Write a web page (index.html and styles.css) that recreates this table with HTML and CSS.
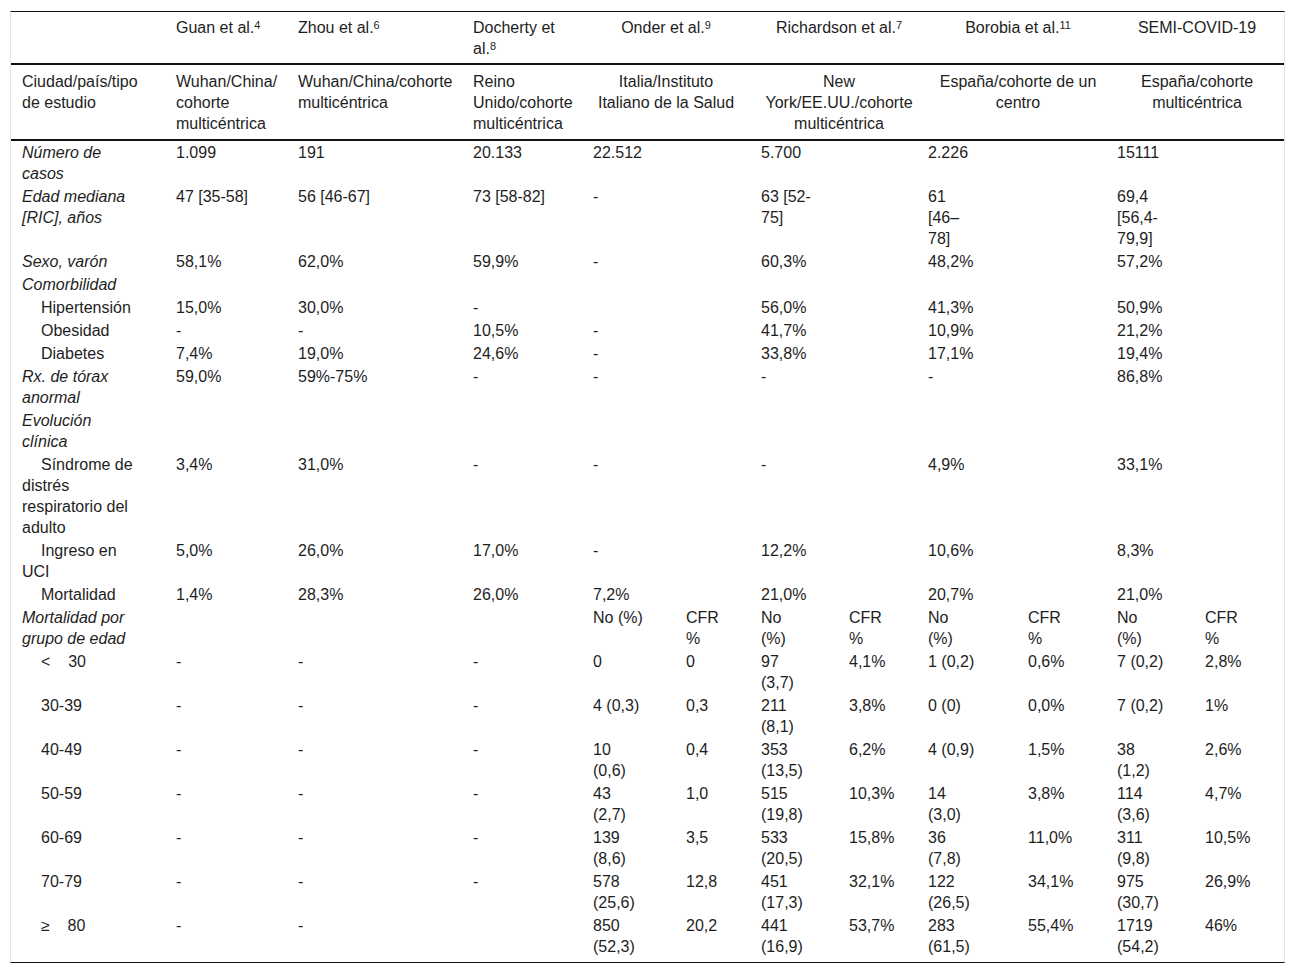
FILE: index.html
```html
<!DOCTYPE html>
<html lang="es">
<head>
<meta charset="utf-8">
<title>Tabla comparativa de cohortes COVID-19</title>
<link rel="stylesheet" href="styles.css">
</head>
<body>
<div class="wrap">
<table class="data">
<colgroup>
<col class="w154"><col class="w122"><col class="w175"><col class="w120">
<col class="w93"><col class="w75"><col class="w88"><col class="w79">
<col class="w100"><col class="w89"><col class="w88"><col class="w90">
</colgroup>
<thead>
<tr class="study">
<th></th>
<th>Guan et al.<sup>4</sup></th>
<th>Zhou et al.<sup>6</sup></th>
<th class="doch">Docherty et al.<sup>8</sup></th>
<th colspan="2" class="c onder">Onder et al.<sup>9</sup></th>
<th colspan="2" class="c rich">Richardson et al.<sup>7</sup></th>
<th colspan="2" class="c boro">Borobia et al.<sup>11</sup></th>
<th colspan="2" class="c semi">SEMI-COVID-19</th>
</tr>
<tr class="place">
<th class="first">Ciudad/país/tipo de estudio</th>
<th class="guan">Wuhan/China/<wbr>cohorte multicéntrica</th>
<th>Wuhan/China/cohorte multicéntrica</th>
<th class="doch">Reino <span class="nw">Unido/cohorte</span> multicéntrica</th>
<th colspan="2" class="c onder">Italia/Instituto Italiano de la Salud</th>
<th colspan="2" class="c rich">New York/EE.UU./cohorte multicéntrica</th>
<th colspan="2" class="c boro">España/cohorte de un centro</th>
<th colspan="2" class="c semi">España/cohorte multicéntrica</th>
</tr>
</thead>
<tbody>
<tr><td class="lab">Número de casos</td><td>1.099</td><td>191</td><td>20.133</td><td>22.512</td><td></td><td>5.700</td><td></td><td>2.226</td><td></td><td>15111</td><td></td></tr>
<tr><td class="lab">Edad mediana [RIC], años</td><td>47 [35-58]</td><td>56 [46-67]</td><td>73 [58-82]</td><td>-</td><td></td><td>63&nbsp;[52-<wbr>75]</td><td></td><td>61 [46–78]</td><td></td><td>69,4 [56,4-<wbr>79,9]</td><td></td></tr>
<tr><td class="lab">Sexo, varón</td><td>58,1%</td><td>62,0%</td><td>59,9%</td><td>-</td><td></td><td>60,3%</td><td></td><td>48,2%</td><td></td><td>57,2%</td><td></td></tr>
<tr><td class="lab">Comorbilidad</td><td></td><td></td><td></td><td></td><td></td><td></td><td></td><td></td><td></td><td></td><td></td></tr>
<tr><td class="sub">Hipertensión</td><td>15,0%</td><td>30,0%</td><td>-</td><td></td><td></td><td>56,0%</td><td></td><td>41,3%</td><td></td><td>50,9%</td><td></td></tr>
<tr><td class="sub">Obesidad</td><td>-</td><td>-</td><td>10,5%</td><td>-</td><td></td><td>41,7%</td><td></td><td>10,9%</td><td></td><td>21,2%</td><td></td></tr>
<tr><td class="sub">Diabetes</td><td>7,4%</td><td>19,0%</td><td>24,6%</td><td>-</td><td></td><td>33,8%</td><td></td><td>17,1%</td><td></td><td>19,4%</td><td></td></tr>
<tr><td class="lab">Rx. de tórax anormal</td><td>59,0%</td><td>59%-75%</td><td>-</td><td>-</td><td></td><td>-</td><td></td><td>-</td><td></td><td>86,8%</td><td></td></tr>
<tr><td class="lab">Evolución clínica</td><td></td><td></td><td></td><td></td><td></td><td></td><td></td><td></td><td></td><td></td><td></td></tr>
<tr><td class="sub">Síndrome de distrés respiratorio del adulto</td><td>3,4%</td><td>31,0%</td><td>-</td><td>-</td><td></td><td>-</td><td></td><td>4,9%</td><td></td><td>33,1%</td><td></td></tr>
<tr><td class="sub">Ingreso en UCI</td><td>5,0%</td><td>26,0%</td><td>17,0%</td><td>-</td><td></td><td>12,2%</td><td></td><td>10,6%</td><td></td><td>8,3%</td><td></td></tr>
<tr><td class="sub">Mortalidad</td><td>1,4%</td><td>28,3%</td><td>26,0%</td><td>7,2%</td><td></td><td>21,0%</td><td></td><td>20,7%</td><td></td><td>21,0%</td><td></td></tr>
<tr><td class="lab">Mortalidad por grupo de edad</td><td></td><td></td><td></td><td>No (%)</td><td>CFR %</td><td>No (%)</td><td>CFR %</td><td>No (%)</td><td>CFR %</td><td>No (%)</td><td>CFR %</td></tr>
<tr><td class="sub">&lt;&nbsp;&nbsp;&nbsp;&nbsp;30</td><td>-</td><td>-</td><td>-</td><td>0</td><td>0</td><td>97 (3,7)</td><td>4,1%</td><td>1 (0,2)</td><td>0,6%</td><td>7 (0,2)</td><td>2,8%</td></tr>
<tr><td class="sub">30-39</td><td>-</td><td>-</td><td>-</td><td>4 (0,3)</td><td>0,3</td><td>211 (8,1)</td><td>3,8%</td><td>0 (0)</td><td>0,0%</td><td>7 (0,2)</td><td>1%</td></tr>
<tr><td class="sub">40-49</td><td>-</td><td>-</td><td>-</td><td>10 (0,6)</td><td>0,4</td><td>353 (13,5)</td><td>6,2%</td><td>4 (0,9)</td><td>1,5%</td><td>38 (1,2)</td><td>2,6%</td></tr>
<tr><td class="sub">50-59</td><td>-</td><td>-</td><td>-</td><td>43 (2,7)</td><td>1,0</td><td>515 (19,8)</td><td>10,3%</td><td>14 (3,0)</td><td>3,8%</td><td>114 (3,6)</td><td>4,7%</td></tr>
<tr><td class="sub">60-69</td><td>-</td><td>-</td><td>-</td><td>139 (8,6)</td><td>3,5</td><td>533 (20,5)</td><td>15,8%</td><td>36 (7,8)</td><td>11,0%</td><td>311 (9,8)</td><td>10,5%</td></tr>
<tr><td class="sub">70-79</td><td>-</td><td>-</td><td>-</td><td>578 (25,6)</td><td>12,8</td><td>451 (17,3)</td><td>32,1%</td><td>122 (26,5)</td><td>34,1%</td><td>975 (30,7)</td><td>26,9%</td></tr>
<tr class="last"><td class="sub">≥&nbsp;&nbsp;&nbsp;&nbsp;80</td><td>-</td><td>-</td><td></td><td>850 (52,3)</td><td>20,2</td><td>441 (16,9)</td><td>53,7%</td><td>283 (61,5)</td><td>55,4%</td><td>1719 (54,2)</td><td>46%</td></tr>
</tbody>
</table>
</div>
</body>
</html>
```

FILE: styles.css
```css
html, body {
  margin: 0;
  background: #ffffff;
}

body {
  padding: 11px 11px 0 10px;
  font-family: "Liberation Sans", Arial, Helvetica, sans-serif;
  font-size: 16px;
  line-height: 21px;
  color: #1e1e1e;
}

.wrap {
  border-left: 1px solid #e4e4e4;
  border-right: 1px solid #e4e4e4;
  border-top: 1px solid #111111;
  border-bottom: 1px solid #111111;
}

.data {
  width: 100%;
  border-collapse: separate;
  border-spacing: 0;
  table-layout: fixed;
}

.w154 { width: 154px; }
.w122 { width: 122px; }
.w175 { width: 175px; }
.w120 { width: 120px; }
.w93 { width: 93px; }
.w75 { width: 75px; }
.w88 { width: 88px; }
.w79 { width: 79px; }
.w100 { width: 100px; }
.w89 { width: 89px; }
.w90 { width: 90px; }

.data th,
.data td {
  text-align: left;
  vertical-align: top;
  font-weight: normal;
  padding: 1px 6px 1px 11px;
}

.data sup {
  font-size: 11px;
  line-height: 0;
  vertical-align: 4px;
}

/* header rows */
.study th {
  padding-top: 5px;
  padding-bottom: 4px;
  border-bottom: 2px solid #111111;
}

.place th {
  padding-top: 6px;
  padding-bottom: 5px;
  border-bottom: 2px solid #111111;
}

.data th.first { padding-right: 26px; }
.data th.guan { padding-right: 6px; }
.data th.doch { padding-right: 6px; }
.data th.c { text-align: center; }
.data th.onder { padding-left: 11px; padding-right: 11px; }
.data th.rich { padding-left: 11px; padding-right: 0; }
.data th.boro { padding-left: 17px; padding-right: 4px; }
.data th.semi { padding-left: 11px; padding-right: 7px; }

.nw { white-space: nowrap; }

/* body columns: wrap widths */
tbody td:nth-child(1) { padding-right: 26px; }
tbody td:nth-child(2) { padding-right: 6px; }
tbody td:nth-child(3) { padding-right: 4px; }
tbody td:nth-child(4) { padding-right: 6px; }
tbody td:nth-child(5) { padding-right: 30px; }
tbody td:nth-child(6) { padding-right: 16px; }
tbody td:nth-child(7) { padding-right: 29px; }
tbody td:nth-child(8) { padding-right: 20px; }
tbody td:nth-child(9) { padding-right: 41px; }
tbody td:nth-child(10) { padding-right: 30px; }
tbody td:nth-child(11) { padding-right: 29px; }
tbody td:nth-child(12) { padding-right: 31px; }

.lab { font-style: italic; }
.sub { text-indent: 19px; }

.last td { padding-bottom: 5px; }
```
